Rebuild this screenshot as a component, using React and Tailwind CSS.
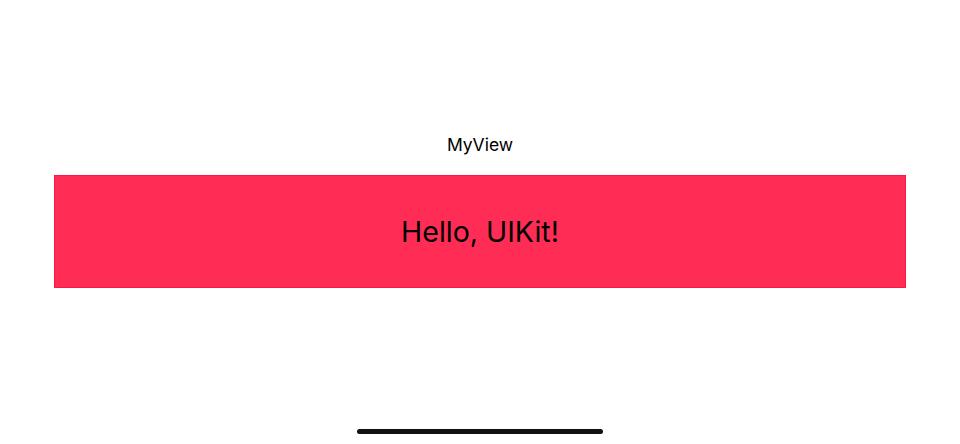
import React from 'react';

const App = () => {
  return (
    <div
      className="w-[960px] h-[444px] bg-white flex flex-col items-stretch overflow-hidden"
      style={{ fontFamily: 'Inter, "Liberation Sans", sans-serif' }}
    >
      {/* Title */}
      <div className="pt-[134px] text-center text-[17.5px] leading-[22px] text-black">MyView</div>

      {/* Pink view */}
      <div className="mt-[19px] mx-[54px] h-[113px] bg-[#ff2d55] border border-[#ff1744] flex items-center justify-center">
        <span className="text-[28.5px] leading-[34px] text-black">Hello, UIKit!</span>
      </div>

      <div className="flex-1" />

      {/* Home indicator */}
      <div className="mb-[10px] mx-auto w-[246px] h-[5px] rounded-full bg-[#111111]" />
    </div>
  );
};

export default App;
